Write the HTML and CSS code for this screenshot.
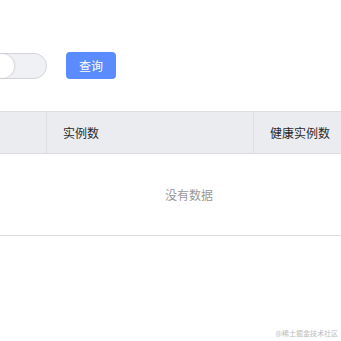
FILE: index.html
```html
<!DOCTYPE html>
<html lang="zh-CN">
<head>
    <meta charset="UTF-8">
    <title>实例列表</title>
    <link rel="stylesheet" href="styles.css">
</head>
<body>
    <div class="page">
        <div class="toolbar">
            <div class="switch"><span class="knob"></span></div>
            <button class="btn-primary">查询</button>
        </div>

        <div class="table">
            <div class="thead">
                <div class="th col-name"></div>
                <div class="th col-count">实例数</div>
                <div class="th col-healthy">健康实例数</div>
            </div>
            <div class="empty">没有数据</div>
        </div>
    </div>

    <div class="watermark">@稀土掘金技术社区</div>
</body>
</html>
```

FILE: styles.css
```css
html, body {
    margin: 0;
    padding: 0;
    background: #fff;
    font-family: "Noto Sans CJK SC", "Liberation Sans", sans-serif;
    color: #333;
}
.page {
    width: 341px;
    height: 341px;
    overflow: hidden;
}
.toolbar {
    display: flex;
    align-items: center;
    padding-top: 52px;
    height: 27px;
    margin-left: -39px;
}
.switch {
    width: 84px;
    height: 24px;
    border: 1px solid #d3d5db;
    border-radius: 13px;
    background: #f0f1f5;
    position: relative;
    flex-shrink: 0;
}
.knob {
    position: absolute;
    right: 32px;
    top: 0;
    width: 24px;
    height: 24px;
    border-radius: 50%;
    background: #fff;
    box-shadow: 1px 0 2px rgba(0, 0, 0, 0.12);
}
.btn-primary {
    margin-left: 19px;
    width: 50px;
    height: 27px;
    border: none;
    border-radius: 4px;
    background: #5b8cff;
    color: #fff;
    font-family: inherit;
    font-size: 12px;
    padding: 0;
    cursor: pointer;
    flex-shrink: 0;
}
.table {
    margin-top: 32px;
    margin-left: -99px;
    width: 500px;
    border-bottom: 1px solid #dcdee2;
}
.thead {
    display: flex;
    height: 41px;
    background: #ebecf0;
    border-top: 1px solid #dcdee2;
    border-bottom: 1px solid #dcdee2;
}
.th {
    display: flex;
    align-items: center;
    padding-left: 16px;
    font-size: 12px;
    color: #2a2a2a;
    box-sizing: border-box;
}
.col-name {
    width: 146px;
    border-right: 1px solid #dcdee2;
}
.col-count {
    width: 207px;
    border-right: 1px solid #dcdee2;
}
.col-healthy {
    flex: 1;
}
.empty {
    height: 81px;
    display: flex;
    align-items: center;
    justify-content: center;
    padding-left: 76px;
    font-size: 12px;
    color: #999;
}
.watermark {
    position: absolute;
    right: 3px;
    bottom: 3px;
    font-size: 7px;
    color: #bbb;
}
```
